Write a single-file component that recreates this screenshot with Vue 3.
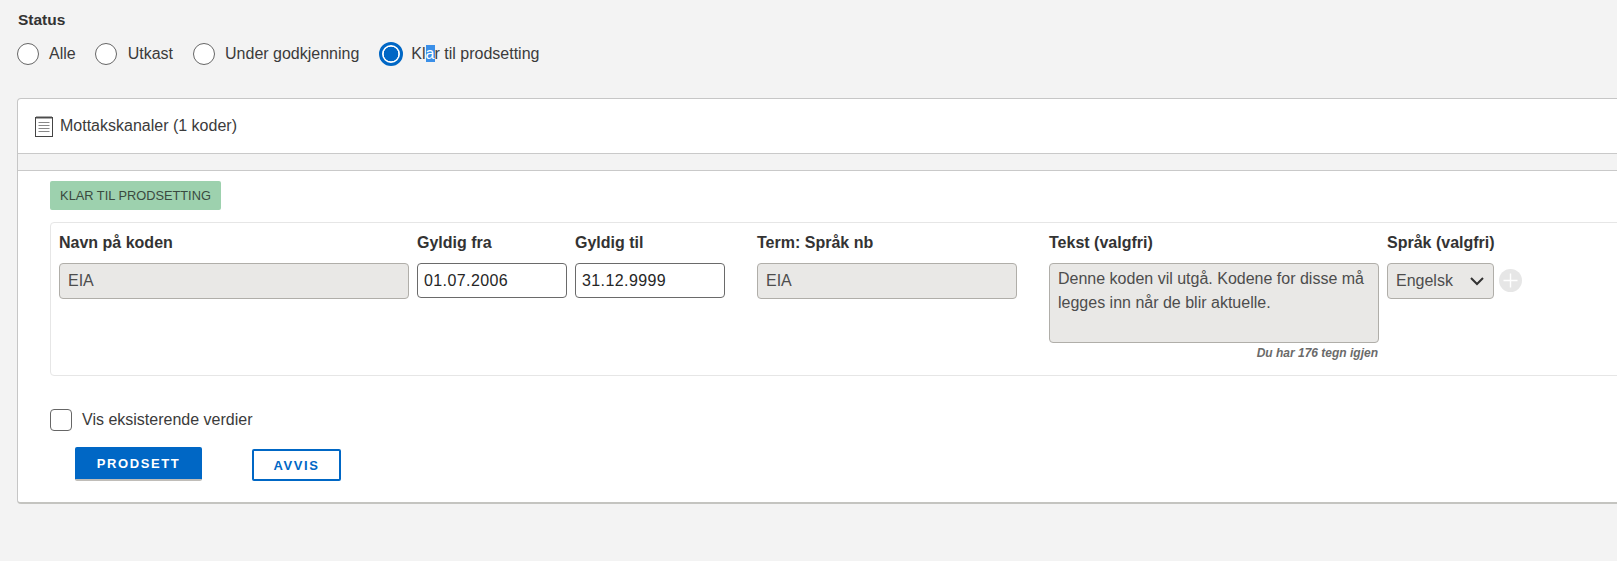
<script setup>
const statuses = [
  { label: 'Alle', on: false },
  { label: 'Utkast', on: false },
  { label: 'Under godkjenning', on: false },
]
</script>

<template>
  <div class="page">
    <div class="status-title">Status</div>
    <div class="radios">
      <label v-for="s in statuses" :key="s.label" class="radio">
        <span class="dot"></span>
        <span>{{ s.label }}</span>
      </label>
      <label class="radio last">
        <span class="dot on"></span>
        <span>Kl<span class="sel">a</span>r til prodsetting</span>
      </label>
    </div>

    <section class="card">
      <header class="card-head">
        <svg class="note" width="18" height="21" viewBox="0 0 18 21" fill="none" stroke="#444" stroke-width="1">
          <rect x="0.5" y="1.5" width="17" height="19" fill="#fff" />
          <path d="M2 0v3M4 0v3M6 0v3M8 0v3M10 0v3M12 0v3M14 0v3M16 0v3" stroke="#555" />
          <path d="M3.5 6.5h11M3.5 9.5h11M3.5 12.5h11M3.5 15.5h11" stroke="#888" />
        </svg>
        <span>Mottakskanaler (1 koder)</span>
      </header>
      <div class="band"></div>
      <div class="body">
        <div class="badge">KLAR TIL PRODSETTING</div>
        <div class="box">
          <div class="col w-name">
            <div class="lbl">Navn på koden</div>
            <div class="field ro">EIA</div>
          </div>
          <div class="col w-date">
            <div class="lbl">Gyldig fra</div>
            <div class="field date">01.07.2006</div>
          </div>
          <div class="col w-date">
            <div class="lbl">Gyldig til</div>
            <div class="field date">31.12.9999</div>
          </div>
          <div class="col w-term">
            <div class="lbl">Term: Språk nb</div>
            <div class="field ro">EIA</div>
          </div>
          <div class="col w-text">
            <div class="lbl">Tekst (valgfri)</div>
            <div class="area">Denne koden vil utgå. Kodene for disse må legges inn når de blir aktuelle.</div>
            <div class="count">Du har 176 tegn igjen</div>
          </div>
          <div class="col w-lang">
            <div class="lbl">Språk (valgfri)</div>
            <div class="field ro lang">
              <span>Engelsk</span>
              <svg width="14" height="9" viewBox="0 0 14 9" fill="none" stroke="#333" stroke-width="2">
                <path d="M1 1l6 6 6-6" />
              </svg>
            </div>
          </div>
          <div class="plus">
            <svg width="23" height="23" viewBox="0 0 23 23">
              <circle cx="11.5" cy="11.5" r="11.5" fill="#e6e6e6" />
              <path d="M11.5 4.5v14M4.5 11.5h14" stroke="#fff" stroke-width="1.4" />
            </svg>
          </div>
        </div>
        <label class="check">
          <span class="cb"></span>
          <span>Vis eksisterende verdier</span>
        </label>
        <div class="actions">
          <button class="btn primary">PRODSETT</button>
          <button class="btn outline">AVVIS</button>
        </div>
      </div>
    </section>
  </div>
</template>

<style>
html, body { margin: 0; background: #f3f3f3; overflow: hidden; }
</style>

<style scoped>
.page {
  width: 1617px;
  height: 561px;
  overflow: hidden;
  box-sizing: border-box;
  padding: 11px 0 0 17px;
  background: #f3f3f3;
  font-family: "Liberation Sans", Arial, sans-serif;
  font-size: 16px;
  color: #3b3b3b;
}
.status-title { font-weight: 700; font-size: 15.5px; line-height: 18px; color: #333; padding-left: 1px; }
.radios { display: flex; align-items: center; margin-top: 12px; height: 26px; }
.radio { display: flex; align-items: center; gap: 10px; margin-right: 20px; }
.radio:first-child { margin-right: 19px; }
.radio:nth-child(2) { gap: 11px; }
.radio.last { gap: 8px; }
.dot {
  width: 22px; height: 22px; box-sizing: border-box;
  border: 1px solid #666; border-radius: 50%; background: #fff;
}
.dot.on {
  width: 24px; height: 24px;
  border: 3px solid #0067c5;
  background: radial-gradient(circle, #0067c5 0 7px, #fff 7.6px);
}
.sel { background: #3a8fe8; color: #fff; }
.card {
  width: 1700px;
  box-sizing: border-box;
  margin-top: 31px;
  height: 406px;
  background: #fff;
  border: 1px solid #c6c6c6;
  border-bottom: 2px solid #c4c4c0;
  border-radius: 4px 0 0 4px;
}
.card-head {
  height: 54px;
  display: flex;
  align-items: center;
  gap: 7px;
  padding-left: 17px;
  font-size: 16px;
  border-bottom: 1px solid #c9c9c9;
}
.note { flex: none; }
.band { height: 16px; background: #f3f3f3; border-bottom: 1px solid #c9c9c9; }
.body { padding: 10px 0 0 32px; }
.badge {
  width: 171px; height: 29px;
  display: flex; align-items: center; justify-content: center;
  background: #9dd1ae;
  border-radius: 2px;
  font-size: 12.8px;
  color: #3a4a3f;
}
.box {
  margin-top: 12px;
  height: 154px;
  box-sizing: border-box;
  border: 1px solid #e6e6e6;
  border-radius: 4px 0 0 4px;
  padding: 11px 0 0 8px;
  display: flex;
}
.col { display: flex; flex-direction: column; flex: none; }
.lbl { font-weight: 700; font-size: 16px; line-height: 18px; margin-bottom: 11px; color: #333; white-space: nowrap; }
.w-name { width: 350px; margin-right: 8px; }
.w-date { width: 150px; margin-right: 8px; }
.w-date + .w-term { margin-left: 24px; }
.w-term { width: 260px; margin-right: 32px; }
.w-text { width: 330px; margin-right: 8px; }
.w-lang { width: 107px; margin-right: 5px; }
.field {
  height: 36px; box-sizing: border-box;
  display: flex; align-items: center;
  padding: 0 8px;
  border: 1px solid #b0aea9;
  border-radius: 4px;
}
.ro { background: #e9e8e6; color: #4d4d4d; }
.date {
  height: 35px;
  border-color: #6a6a6a;
  background: #fff;
  padding: 0 6px;
  color: #262626;
  letter-spacing: 0.4px;
}
.area {
  height: 80px; box-sizing: border-box;
  padding: 3px 8px;
  background: #e9e8e6;
  border: 1px solid #b0aea9;
  border-radius: 4px;
  line-height: 24px;
  color: #4d4d4d;
}
.count {
  text-align: right;
  font-size: 12px;
  line-height: 13px;
  font-weight: 700;
  font-style: italic;
  color: #6a6a6a;
  margin-top: 4px;
  padding-right: 1px;
}
.lang { justify-content: space-between; padding-right: 9px; }
.plus { margin-top: 35px; height: 23px; line-height: 0; }
.check { display: flex; align-items: center; gap: 10px; margin-top: 33px; height: 22px; }
.cb {
  width: 22px; height: 22px; box-sizing: border-box;
  background: #fff;
  border: 1px solid #666;
  border-radius: 4px;
}
.actions { display: flex; align-items: flex-end; margin: 16px 0 0 25px; }
.btn {
  font-family: inherit;
  font-weight: 700;
  font-size: 13px;
  letter-spacing: 1.6px;
  box-sizing: border-box;
  padding: 0;
}
.primary {
  width: 127px; height: 34px;
  background: #0067c5;
  color: #fff;
  border: 0;
  border-bottom: 2px solid #c0bdb8;
  border-radius: 2px;
  margin-right: 50px;
}
.outline {
  width: 89px; height: 32px;
  background: #fff;
  color: #0067c5;
  border: 2px solid #0067c5;
  border-radius: 2px;
}
</style>
